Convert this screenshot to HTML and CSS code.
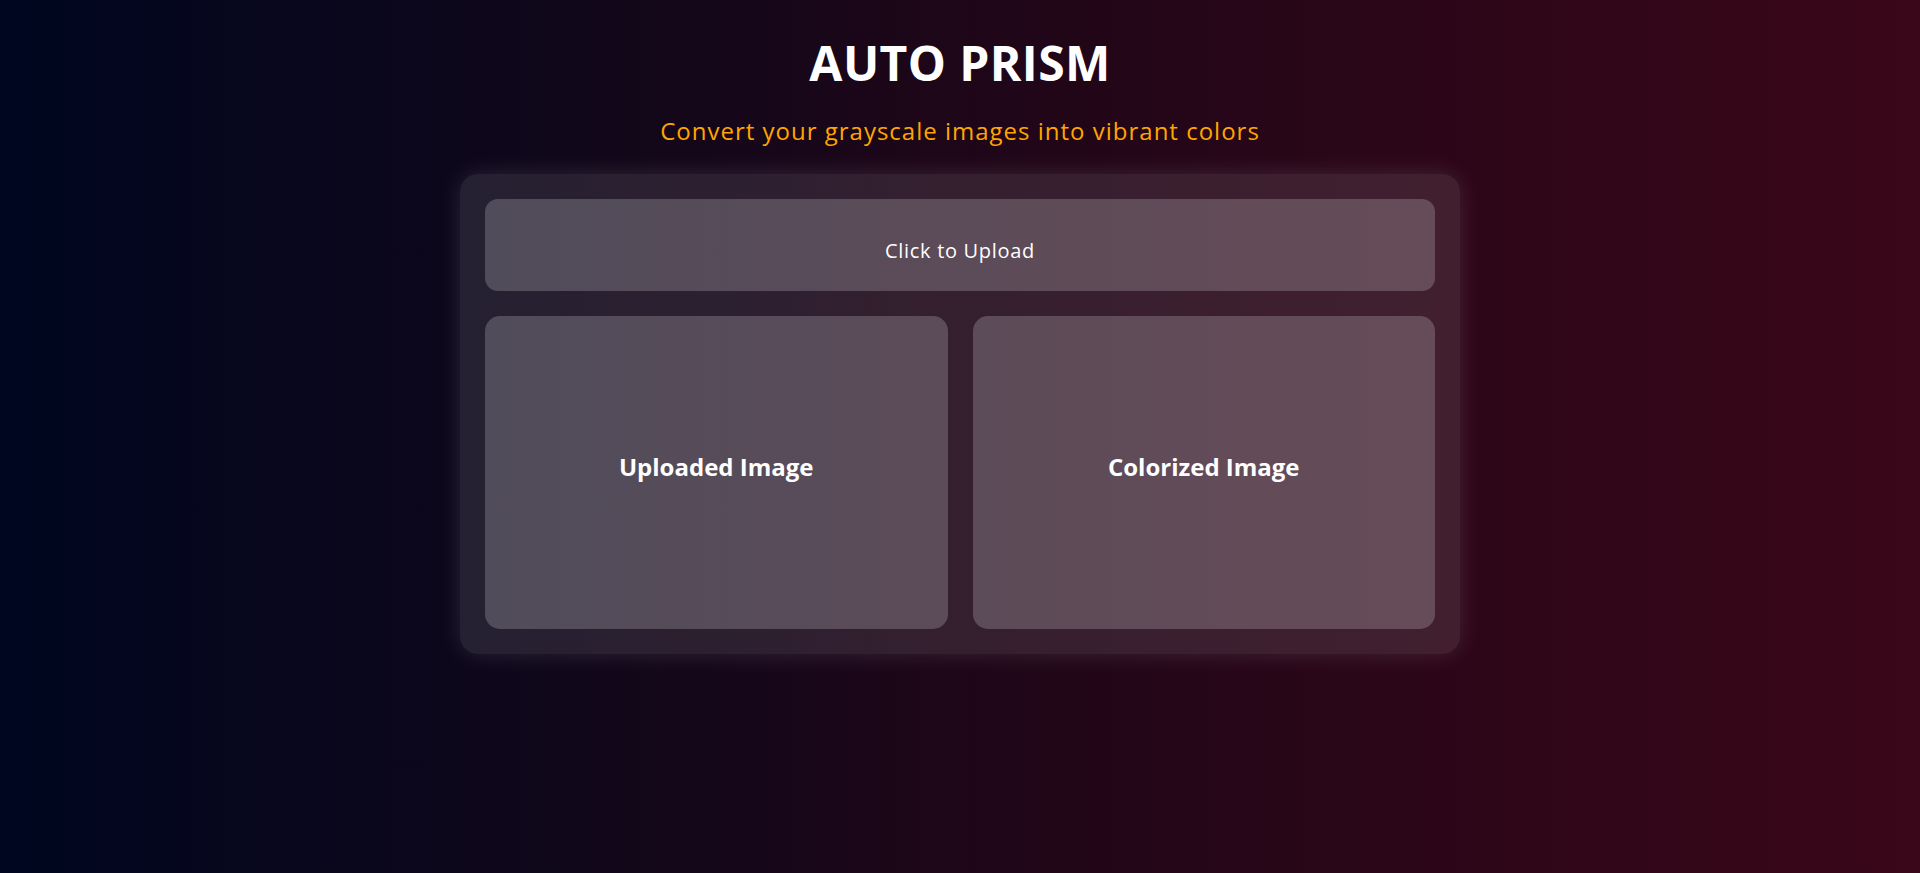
FILE: index.html
```html
<!DOCTYPE html>
<html lang="en">
<head>
<meta charset="UTF-8">
<title>Auto Prism</title>
<link rel="stylesheet" href="styles.css">
</head>
<body>
  <header class="header">
    <h1 class="title">AUTO PRISM</h1>
    <p class="subtitle">Convert your grayscale images into vibrant colors</p>
  </header>
  <main class="panel">
    <label class="upload">Click to Upload</label>
    <div class="previews">
      <div class="preview"><h3 class="preview-label">Uploaded Image</h3></div>
      <div class="preview"><h3 class="preview-label">Colorized Image</h3></div>
    </div>
  </main>
</body>
</html>
```

FILE: styles.css
```css
html, body {
  margin: 0;
  padding: 0;
}

body {
  min-height: 873px;
  background: linear-gradient(to right, #000620 0%, #10071a 30%, #210618 55%, #3a0619 100%);
  font-family: "Open Sans", "Liberation Sans", sans-serif;
  color: #ffffff;
  padding-top: 39px;
  box-sizing: border-box;
}

.header {
  text-align: center;
}

.title {
  margin: 0;
  font-size: 48px;
  line-height: 48px;
  font-weight: 700;
  letter-spacing: 0.4px;
  color: #ffffff;
}

.subtitle {
  margin: 32px 0 0;
  font-size: 24px;
  line-height: 24px;
  color: #ffa500;
  letter-spacing: 1px;
}

.panel {
  width: 1000px;
  box-sizing: border-box;
  margin: 31px auto 0;
  padding: 25px;
  border-radius: 18px;
  background: rgba(255, 255, 255, 0.1);
  box-shadow: 0 0 24px rgba(255, 255, 255, 0.12);
  display: flex;
  flex-direction: column;
  gap: 25px;
}

.upload {
  height: 92px;
  border-radius: 13px;
  background: rgba(255, 255, 255, 0.2);
  display: flex;
  align-items: center;
  justify-content: center;
  font-size: 20px;
  letter-spacing: 0.7px;
  padding-top: 10px;
  box-sizing: border-box;
  color: #ffffff;
  cursor: pointer;
}

.previews {
  display: grid;
  grid-template-columns: 1fr 1fr;
  gap: 25px;
}

.preview {
  height: 313px;
  border-radius: 15px;
  background: rgba(255, 255, 255, 0.2);
  display: flex;
  align-items: center;
  justify-content: center;
  padding-bottom: 12px;
  box-sizing: border-box;
}

.preview-label {
  margin: 0;
  font-size: 24px;
  font-weight: 700;
  color: #ffffff;
}
```
